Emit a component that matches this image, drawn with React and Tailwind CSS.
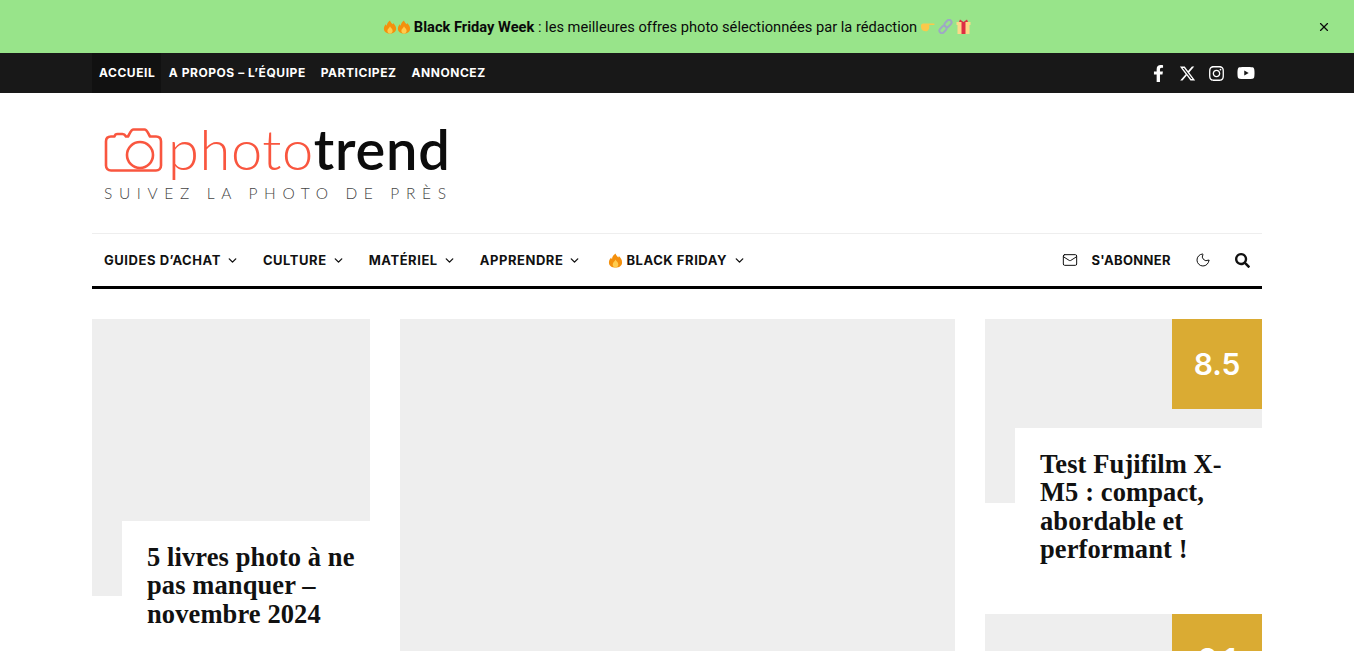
import React from 'react';
import { ChevronDown, Mail, Moon, X } from 'lucide-react';
import { FaFacebookF, FaInstagram, FaYoutube, FaSearch } from 'react-icons/fa';
import { FaXTwitter } from 'react-icons/fa6';

const topLinks = ['A PROPOS – L’ÉQUIPE', 'PARTICIPEZ', 'ANNONCEZ'];
const navLinks = ['GUIDES D’ACHAT', 'CULTURE', 'MATÉRIEL', 'APPRENDRE'];

function Fire({ size = 16 }) {
  return (
    <svg width={size} height={size} viewBox="0 0 16 16" className="shrink-0">
      <path d="M8 .5c.6 2.200 2 3 3 4.400.4-.5.5-1 .5-1.600C13.300 5 15 7 15 10c0 3.500-3 5.500-7 5.500S1 13.500 1 10c0-2.500 1.300-4 2.300-5.200.1.800.4 1.300 1 1.700C4.300 4 6 2 8 .5z" fill="#f4900c" />
      <path d="M8 7c.3 1.500 3 2.600 3 5.200 0 2-1.400 3.300-3 3.300s-3-1.300-3-3.300C5 10 7.500 9 8 7z" fill="#ffcc4d" />
    </svg>
  );
}

function Hand() {
  return (
    <svg width="15" height="14" viewBox="0 0 15 14" className="shrink-0">
      <path d="M1 5.500C1 4 2.500 3.500 4 3.500h10c.8 0 .8 1.500 0 1.500H9c.5.600.5 1.500.2 2.200.3 1.200-.2 2-.8 2.300-.2 1.200-1.200 1.800-2.400 1.800-2.500 0-4.500-1-4.800-3-.2-1-.2-2-.2-2.800z" fill="#fbc94a" />
    </svg>
  );
}

function Link() {
  return (
    <svg width="15" height="15" viewBox="0 0 15 15" fill="none" stroke="#9fa8c4" strokeWidth="2" className="shrink-0">
      <rect x="7.500" y="0.500" width="5" height="8" rx="2.500" transform="rotate(42 10 4.500)" />
      <rect x="2.500" y="6.500" width="5" height="8" rx="2.500" transform="rotate(42 5 10.500)" />
    </svg>
  );
}

function Gift() {
  return (
    <svg width="15" height="15" viewBox="0 0 15 15" className="shrink-0">
      <rect x="1.500" y="5" width="12" height="10" fill="#fdd888" />
      <rect x="0.500" y="3" width="14" height="3" fill="#fdd888" />
      <rect x="5.500" y="3" width="4" height="12" fill="#dd2e44" />
      <path d="M7.500 3 4 0.500 3 3zM7.500 3 11 0.500 12 3z" fill="#dd2e44" />
    </svg>
  );
}

function Logo() {
  return (
    <div className="flex flex-col w-[360px]">
      <div className="flex items-start h-[56px]">
        <svg width="60" height="50" viewBox="0 0 60 50" fill="none" stroke="#f9563f" strokeWidth="2.600" className="shrink-0 mt-[1px]" strokeLinejoin="round">
          <path d="M7 9.500h3.500c.6-2.500 1.500-2.500 3-2.500h5c1.500 0 2.500.8 3.500 2.500h2c2-3.500 3-7 5.500-7h11c2.500 0 3.500 3.500 5.500 7H52c3 0 5 1.500 5 5v24c0 3-2 5-5 5H7c-3 0-5-2-5-5v-24c0-3.500 2-5 5-5z" />
          <circle cx="36" cy="28" r="13" />
        </svg>
        <div className="font-['Lato',sans-serif] text-[56px] leading-[56px] ml-[4px] -mt-[5px] whitespace-nowrap">
          <span className="text-[#f9563f] font-light tracking-[0.6px]">photo</span>
          <span className="text-[#0c0c0c] font-semibold tracking-[0.8px]">trend</span>
        </div>
      </div>
      <div className="font-['Lato',sans-serif] font-light text-[15.500px] leading-[20px] tracking-[6.650px] text-[#444] whitespace-nowrap mt-[1px]">SUIVEZ LA PHOTO DE PRÈS</div>
    </div>
  );
}

function Card({ imgHeight, title, score, className }) {
  return (
    <article className={className}>
      <div className="relative bg-[#eeeeee]" style={{ height: imgHeight }}>
        {score && (
          <div className="absolute top-0 right-0 w-[90px] h-[90px] bg-[#daab33] text-white font-['Inter',sans-serif] font-semibold text-[30px] flex items-center justify-center">{score}</div>
        )}
      </div>
      <div className="relative bg-white ml-[30px] -mt-[75px] pl-[25px] pr-[10px] pt-[21.500px] pb-[20.500px]">
        <h2 className="font-['Liberation_Serif',serif] font-bold text-[26.500px] leading-[28.500px] tracking-[0.1px] text-[#111]">{title}</h2>
      </div>
    </article>
  );
}

function App() {
  return (
    <div className="w-[1354px] h-[651px] overflow-hidden bg-white">
      <div className="relative h-[53px] bg-[#98e48a] flex items-center justify-center gap-[3px] text-[14.650px] text-[#0a0a0a] font-['Roboto',sans-serif]">
        <span className="flex">
          <Fire size={14} />
          <Fire size={14} />
        </span>
        <span className="whitespace-nowrap mt-[2px]"><b className="font-bold">Black Friday Week</b> : les meilleures offres photo sélectionnées par la rédaction</span>
        <Hand />
        <Link />
        <Gift />
        <X size={14} strokeWidth={2} className="absolute right-[23px] top-[20px]" />
      </div>

      <div className="h-[40px] bg-[#181818]">
        <div className="w-[1170px] mx-auto h-full flex items-center justify-between">
          <div className="flex h-full font-['Inter',sans-serif] font-bold text-[12px] tracking-[0.55px] text-white">
            <a className="bg-[#111111] pl-[7px] pr-[6px] flex items-center">ACCUEIL</a>
            {topLinks.map(l => (
              <a key={l} className="px-[7.500px] flex items-center whitespace-nowrap">{l}</a>
            ))}
          </div>
          <div className="flex items-center gap-[12px] text-white pr-[7px]">
            <FaFacebookF size={17} />
            <FaXTwitter size={17} />
            <FaInstagram size={17} />
            <FaYoutube size={18} />
          </div>
        </div>
      </div>

      <div className="w-[1170px] mx-auto">
        <div className="h-[141px] border-b border-[#eeeeee] pt-[33px] pl-[12px]">
          <Logo />
        </div>
        <nav className="h-[55px] border-b-[3px] border-black flex items-center justify-between px-[12px] font-['Inter',sans-serif] font-bold text-[13px] tracking-[0.55px] text-[#111]">
          <div className="flex items-center gap-[24px]">
            {navLinks.map(l => (
              <a key={l} className="flex items-center gap-[5px] whitespace-nowrap">
                <span className="mt-[2px]">{l}</span>
                <ChevronDown size={13} strokeWidth={2.500} />
              </a>
            ))}
            <a className="flex items-center gap-[6px] whitespace-nowrap ml-[3px]">
              <span className="flex items-center gap-[3px]"><Fire size={15} /><span className="mt-[2px]">BLACK FRIDAY</span></span>
              <ChevronDown size={13} strokeWidth={2.500} />
            </a>
          </div>
          <div className="flex items-center">
            <Mail size={16} strokeWidth={1.500} />
            <span className="ml-[13px] mt-[2px] tracking-[0.35px]">S'ABONNER</span>
            <Moon size={16} strokeWidth={1.500} className="ml-[24px]" />
            <FaSearch size={15} className="ml-[24px]" />
          </div>
        </nav>

        <div className="grid grid-cols-[278px_555px_277px] gap-[30px] mt-[30px]">
          <Card imgHeight={277} title="5 livres photo à ne pas manquer – novembre 2024" />
          <div className="bg-[#eeeeee] h-[400px]" />
          <div className="flex flex-col">
            <Card imgHeight={184} score="8.5" title="Test Fujifilm X-M5 : compact, abordable et performant !" className="mb-[30px]" />
            <Card imgHeight={184} score="8.1" title="" />
          </div>
        </div>
      </div>
    </div>
  );
}

export default App;
